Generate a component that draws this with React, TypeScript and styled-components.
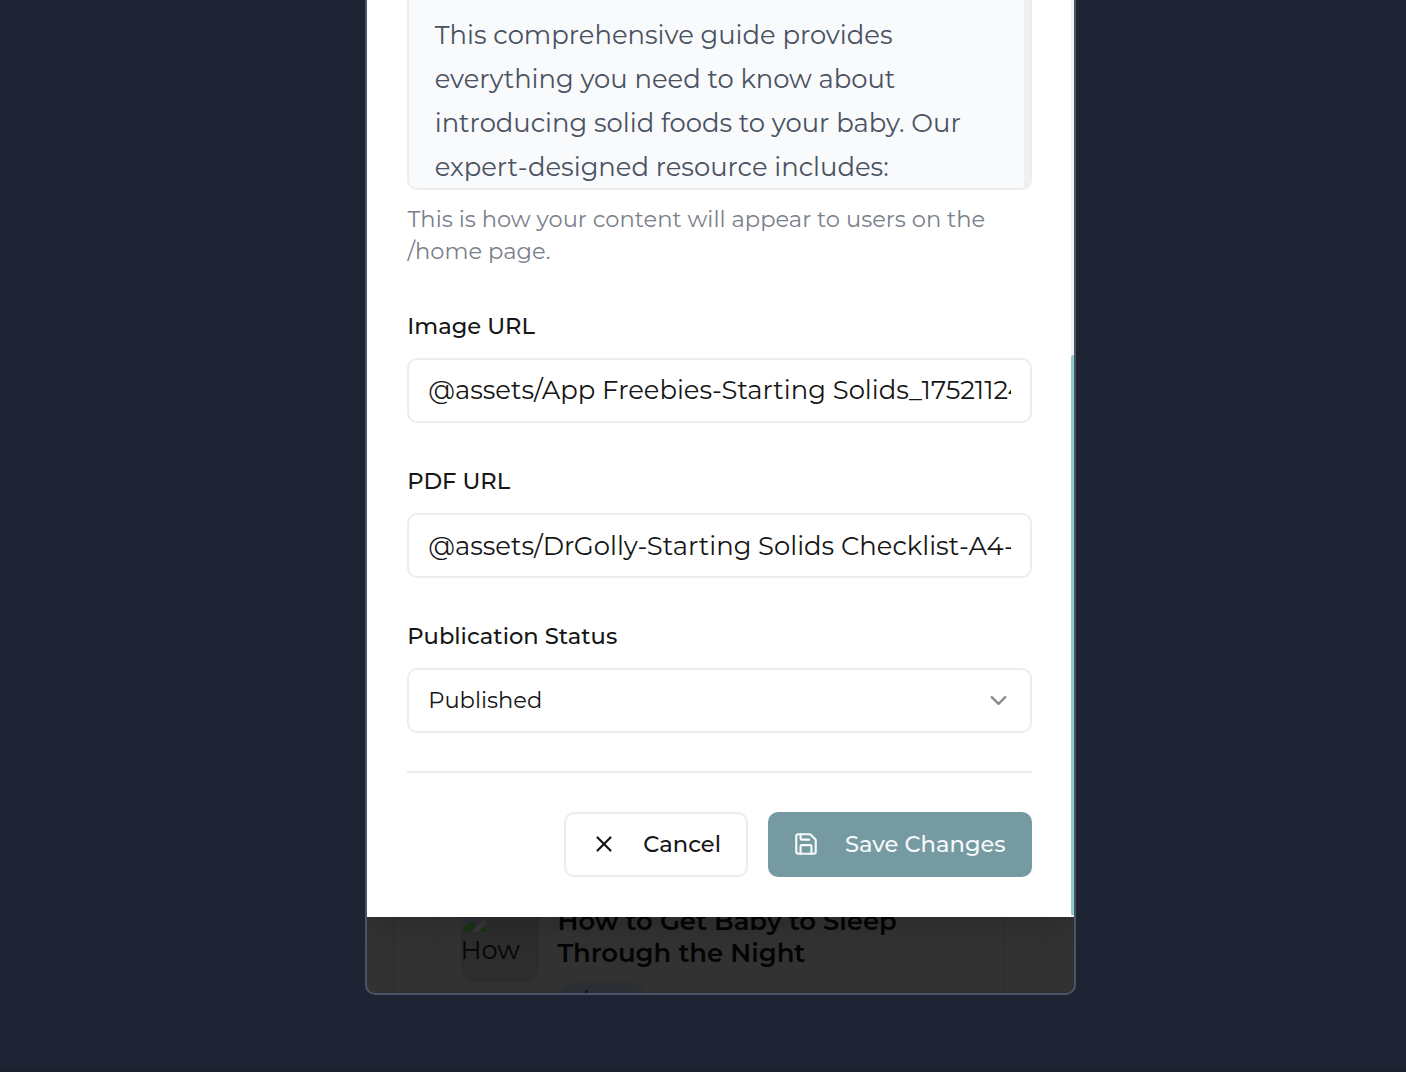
import React from 'react';
import styled, { createGlobalStyle } from 'styled-components';
import { ChevronDown, Save, X } from 'lucide-react';

const GlobalStyle = createGlobalStyle`
  * { box-sizing: border-box; }
  body {
    margin: 0;
    overflow: hidden;
    background: #1e2433;
    font-family: Montserrat, Inter, 'Liberation Sans', sans-serif;
    font-size: 22.6px;
    line-height: 32px;
    color: #161616;
  }
  input, button { font: inherit; color: inherit; }
`;

const Stage = styled.div`
  display: flex;
  width: 1406px;
  height: 1072px;
  padding-left: 365px;
  overflow: hidden;
  background: linear-gradient(#1e2433 1067px, #1a1d2c 1072px);
`;

const Device = styled.div`
  display: grid;
  grid-template: 993px / 706.5px;
  width: 710.5px;
  height: 995px;
  border: 2px solid #4b5368;
  border-top: 0;
  border-radius: 0 0 10px 10px;
  overflow: hidden;
  background: #323232;
`;

const Backdrop = styled.div`
  grid-area: 1 / 1;
  display: flex;
  align-items: flex-end;
  padding: 0 28px 0 26px;
  overflow: hidden;
`;

const OuterCard = styled.div`
  flex: 1;
  height: 120px;
  padding: 0 40px 0 39.5px;
  border: solid #2d2d2d;
  border-width: 0 1px;
`;

const PostCard = styled.article`
  display: flex;
  gap: 19px;
  height: 120px;
  padding-left: 26px;
  border: solid #2d2d2d;
  border-width: 0 1px;
`;

const Thumb = styled.div`
  width: 78px;
  height: 109px;
  padding-top: 45px;
  border-radius: 13px;
  background: #2d2d2d;
  color: #050505;
  font-size: 25.8px;
`;

const BrokenImage = styled.svg`
  display: block;
  width: 26px;
  height: 14px;
  margin-bottom: 2px;
`;

const PostBody = styled.div`
  padding-top: 32px;
`;

const PostTitle = styled.h3`
  margin: 0;
  width: 400px;
  font-size: 25.85px;
  font-weight: 600;
  line-height: 32px;
  color: #040404;
`;

const Tag = styled.span`
  display: block;
  width: 87px;
  height: 32px;
  margin-top: 14px;
  padding-left: 16px;
  border-radius: 16px;
  background: #2b2f33;
  color: #0c1424;
  font-size: 19.4px;
  font-weight: 600;
  line-height: 30px;
`;

const Modal = styled.section`
  grid-area: 1 / 1;
  z-index: 1;
  display: flex;
  height: 917px;
  background: #fff;
  box-shadow: 0 14px 24px -6px rgba(0, 0, 0, 0.16);
`;

const Form = styled.form`
  width: 703.5px;
  padding: 0 39px 0 40px;
`;

const ScrollTrack = styled.div`
  display: flex;
  flex-direction: column;
  justify-content: flex-end;
  width: 3px;
  padding-bottom: 2px;
  background: #f1f1f1;
`;

const ScrollThumb = styled.div`
  height: 560px;
  border-radius: 2px 0 0 2px;
  background: #8ecbc8;
`;

const Preview = styled.div`
  display: flex;
  height: 190px;
  border: 2px solid #ededed;
  border-top: 0;
  border-radius: 0 0 10px 10px;
  overflow: hidden;
  background: #f9fafc;
`;

const PreviewText = styled.p`
  flex: 1;
  margin: 0;
  padding: 13px 25px 0 25.7px;
  font-size: 25.85px;
  line-height: 44px;
  color: #4a5262;
  white-space: nowrap;
`;

const PreviewTrack = styled.div`
  width: 6px;
  background: #f0f0f0;
`;

const Hint = styled.p`
  margin: 13px 0 43px;
  padding-left: 0.4px;
  color: #7a7f8b;
`;

const Field = styled.div`
  margin-bottom: 43px;
`;

const Label = styled.label`
  display: block;
  height: 32px;
  margin-bottom: 16px;
  padding-left: 0.3px;
  font-weight: 500;
`;

const TextInput = styled.input<{ $lift?: number }>`
  display: block;
  width: 100%;
  height: 64.5px;
  margin-bottom: -0.5px;
  padding: 0 18.5px ${(p) => p.$lift ?? 0}px 19.2px;
  border: 2px solid #ededed;
  border-radius: 10px;
  outline: 0;
  background: #fff;
  font-size: 25.85px;
`;

const SelectButton = styled.button`
  display: flex;
  align-items: center;
  justify-content: space-between;
  width: 100%;
  height: 64.5px;
  padding: 0 18px 0 19.2px;
  border: 2px solid #ededed;
  border-radius: 10px;
  background: #fff;
`;

const Footer = styled.footer`
  display: flex;
  justify-content: flex-end;
  gap: 20px;
  margin-top: -5px;
  padding-top: 39px;
  border-top: 2px solid #ededed;
`;

const Button = styled.button<{ $primary?: boolean }>`
  display: flex;
  align-items: center;
  gap: 26px;
  width: ${(p) => (p.$primary ? 264 : 184)}px;
  height: 65px;
  padding: 0 0 1px ${(p) => (p.$primary ? 25.5 : 25.8)}px;
  border: ${(p) => (p.$primary ? '0' : '2px solid #ededed')};
  border-radius: 10px;
  background: ${(p) => (p.$primary ? '#769aa2' : '#fff')};
  color: ${(p) => (p.$primary ? '#f5f9fb' : '#161616')};
  font-weight: 500;
`;

export default function App() {
  return (
    <>
      <GlobalStyle />
      <Stage>
        <Device>
          <Backdrop>
            <OuterCard>
              <PostCard>
                <Thumb>
                  <BrokenImage viewBox="0 0 26 14">
                    <path d="M0 0h25v14H0z" fill="#2d3037" />
                    <path d="M1 14C3 7 8 3 12 4l4 3-6 7z" fill="#1d3315" />
                    <path d="M18 14l7-7v7z" fill="#1d3315" />
                    <path d="M10 14L23 1l2 1v4l-8 8z" fill="#373737" />
                  </BrokenImage>
                  How
                </Thumb>
                <PostBody>
                  <PostTitle>
                    How to Get Baby to Sleep
                    <br />
                    Through the Night
                  </PostTitle>
                  <Tag>sleep</Tag>
                </PostBody>
              </PostCard>
            </OuterCard>
          </Backdrop>
          <Modal>
            <Form onSubmit={(e) => e.preventDefault()}>
              <Preview>
                <PreviewText>
                  This comprehensive guide provides
                  <br />
                  everything you need to know about
                  <br />
                  introducing solid foods to your baby. Our
                  <br />
                  expert-designed resource includes:
                </PreviewText>
                <PreviewTrack />
              </Preview>
              <Hint>
                This is how your content will appear to users on the
                <br />
                /home page.
              </Hint>
              <Field>
                <Label htmlFor="image">Image URL</Label>
                <TextInput id="image" $lift={2} defaultValue="@assets/App Freebies-Starting Solids_1752112469" />
              </Field>
              <Field>
                <Label htmlFor="pdf">PDF URL</Label>
                <TextInput id="pdf" defaultValue="@assets/DrGolly-Starting Solids Checklist-A4-" />
              </Field>
              <Field>
                <Label>Publication Status</Label>
                <SelectButton type="button">
                  Published
                  <ChevronDown size={27} color="#8a8a8a" />
                </SelectButton>
              </Field>
              <Footer>
                <Button type="button">
                  <X size={26} />
                  Cancel
                </Button>
                <Button type="submit" $primary>
                  <Save size={26} />
                  Save Changes
                </Button>
              </Footer>
            </Form>
            <ScrollTrack>
              <ScrollThumb />
            </ScrollTrack>
          </Modal>
        </Device>
      </Stage>
    </>
  );
}
